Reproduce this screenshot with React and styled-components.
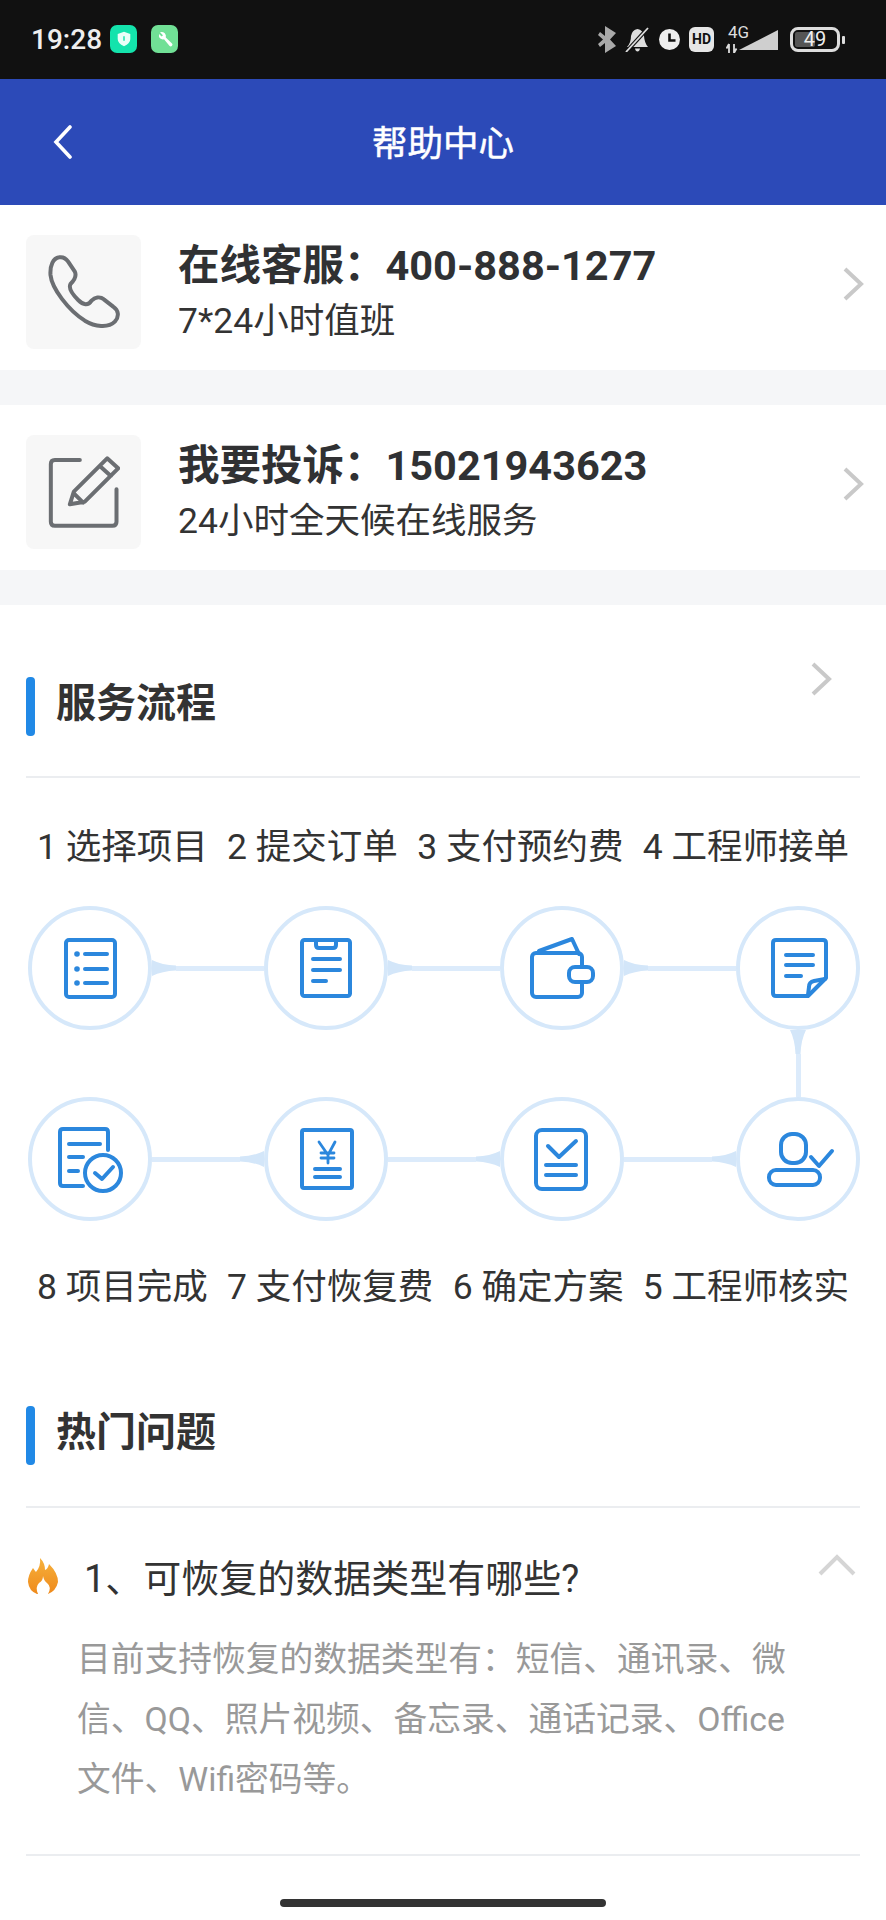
import styled, { createGlobalStyle } from "styled-components";

const GlobalStyle = createGlobalStyle`
  html, body {
    margin: 0;
    padding: 0;
    background: #fff;
  }
  body {
    font-family: Roboto, "Noto Sans CJK SC", sans-serif;
    color: #303133;
  }
`;

const FIRST_STEPS = ["1 选择项目", "2 提交订单", "3 支付预约费", "4 工程师接单"];
const LAST_STEPS = ["8 项目完成", "7 支付恢复费", "6 确定方案", "5 工程师核实"];

const ListIcon = () => (
  <>
    <rect x="-24" y="-28" width="49" height="57" rx="3" />
    <path d="M-5 -14H17M-5 1H17M-5 15H17" />
    <circle className="dot" cx="-13" cy="-14" r="2.8" />
    <circle className="dot" cx="-13" cy="1" r="2.8" />
    <circle className="dot" cx="-13" cy="15" r="2.8" />
  </>
);

const OrderIcon = () => (
  <>
    <rect x="-24" y="-28" width="48" height="56" rx="2.5" />
    <path d="M-10 -27V-23Q-10 -20 -7 -20H7Q10 -20 10 -23V-27" />
    <path d="M-13 -9H14M-13 2H14M-13 13H0" />
  </>
);

const WalletIcon = () => (
  <>
    <path d="M-23 -17L10 -29L17 -14" />
    <rect x="-30" y="-15" width="50" height="44" rx="4" />
    <rect className="solid" x="7" y="-1" width="24" height="15" rx="6" />
  </>
);

const NoteIcon = () => (
  <>
    <path d="M10 28H-22Q-25 28 -25 25V-25Q-25 -28 -22 -28H25Q28 -28 28 -25V10Z" />
    <path d="M27 11L16 13Q11 14 11 19L10 27" />
    <path d="M-12 -13H15M-12 -3H15M-12 8H3" />
  </>
);

const ConfirmIcon = () => (
  <>
    <path d="M-7 27H-27Q-30 27 -30 24V-27Q-30 -30 -27 -30H15Q18 -30 18 -27V-9" />
    <path d="M-21 -15H10M-21 -2H-7M-21 12H-12" />
    <circle cx="13" cy="14" r="18" />
    <path d="M5 14L12 20L23 8" />
  </>
);

const FeeIcon = () => (
  <>
    <rect x="-24" y="-29" width="50" height="58" rx="2" />
    <path strokeWidth="2.8" d="M-7 -17L2 -4L9 -17M2 -4V4M-5 -6H8M-5 -1H8" />
    <path d="M-11 10H14M-11 18H14" />
  </>
);

const PlanIcon = () => (
  <>
    <rect x="-26" y="-29" width="50" height="59" rx="6" />
    <path d="M-14 -13L-3 -2L14 -18" />
    <path d="M-16 6H14M-16 16H14" />
  </>
);

const VerifyIcon = () => (
  <>
    <rect x="-17" y="-25" width="25" height="29" rx="11" />
    <rect x="-29" y="11" width="51" height="15" rx="7" />
    <path d="M13 -2L21 7L34 -8" />
  </>
);

const StepIcon = ({ children }) => <IconSvg viewBox="-40 -40 80 80">{children}</IconSvg>;

const Chevron = ({ className }) => (
  <svg className={className} viewBox="0 0 24 36" width="24" height="36">
    <path d="M4 3L20 18L4 33" fill="none" stroke="#c9c9c9" strokeWidth="4" />
  </svg>
);

export default function App() {
  return (
    <Page>
      <GlobalStyle />
      <StatusBar>
        <StatusLeft>
          <Clock>19:28</Clock>
          <AppBadge $bg="#14e3ac">
            <svg viewBox="0 0 20 20" width="18" height="18">
              <path d="M10 2L17 4.5V10Q17 15 10 18Q3 15 3 10V4.5Z" fill="#eafff8" />
              <path d="M10 7V12" stroke="#14e3ac" strokeWidth="1.6" />
            </svg>
          </AppBadge>
          <AppBadge $bg="#71e096" $gap>
            <svg viewBox="0 0 20 20" width="20" height="20">
              <path
                d="M5 3.2L8 6.2L6.6 7.6L4 5Q3.3 8 5.3 9.6Q6.9 10.8 9 10.2L14.6 17Q15.8 18 17 16.8Q18 15.6 17 14.6L10.8 8.4Q11.4 6 9.8 4.2Q7.8 2.4 5 3.2Z"
                fill="#fff"
              />
            </svg>
          </AppBadge>
        </StatusLeft>
        <StatusRight>
          <svg viewBox="0 0 18 27" width="18" height="27">
            <path d="M7 0L18 7L12 13.5L18 20L7 27V17L2 21L0 18L5 13.5L0 9L2 6L7 10Z" fill="#a9a9a9" />
          </svg>
          <svg viewBox="0 0 25 25" width="25" height="25">
            <path d="M12.5 2Q18 3 19 9Q19.5 16 23 20H2Q6 16 6 9Q7 3 12.5 2Z" fill="#ddd" />
            <path d="M10 21.5H15Q14.5 24.5 12.5 24.5Q10.5 24.5 10 21.5Z" fill="#ddd" />
            <path d="M23 1L2 24" stroke="#111" strokeWidth="4" />
            <path d="M23 1L1 25" stroke="#ddd" strokeWidth="1.8" />
          </svg>
          <svg viewBox="0 0 21 21" width="21" height="21">
            <circle cx="10.5" cy="10.5" r="10.5" fill="#eee" />
            <path d="M10.5 4.5V11.5H16.5" fill="none" stroke="#111" strokeWidth="2.6" />
          </svg>
          <HdBadge>HD</HdBadge>
          <Signal>
            <NetworkLabel>4G</NetworkLabel>
            <svg viewBox="0 0 52 27" width="52" height="27">
              <path d="M13 24L52 4V24Z" fill="#cfcfcf" />
              <path d="M3 18V27M0.5 22.5L3 18M8 18V27M10.5 22.5L8 27" stroke="#ddd" strokeWidth="1.8" fill="none" />
            </svg>
          </Signal>
          <Battery>
            <BatteryLevel />
            <BatteryText>49</BatteryText>
          </Battery>
          <BatteryNub />
        </StatusRight>
      </StatusBar>

      <NavBar>
        <BackButton viewBox="0 0 20 34" width="20" height="34">
          <path d="M17 2L3 17L17 32" fill="none" stroke="#fff" strokeWidth="3.6" strokeLinecap="round" />
        </BackButton>
        <NavTitle>帮助中心</NavTitle>
      </NavBar>

      <ContactRow>
        <IconBox>
          <svg viewBox="145 135 215 225" width="72" height="75">
            <ContactPath d="M178 142C160 145 150 165 152 195C156 235 205 300 255 332C285 350 325 355 345 335C360 318 355 300 340 290L312 268C300 258 285 262 275 272C265 288 250 285 235 270C220 255 205 235 212 222C222 212 232 200 225 185L205 155C198 145 188 140 178 142Z" />
          </svg>
        </IconBox>
        <ContactText>
          <ContactTitle>在线客服：400-888-1277</ContactTitle>
          <ContactSub>7*24小时值班</ContactSub>
        </ContactText>
        <RowChevron />
      </ContactRow>
      <Gap />
      <ContactRow>
        <IconBox>
          <svg viewBox="145 735 215 225" width="72" height="75">
            <ContactPath d="M240 750H165Q153 750 153 762V935Q153 947 165 947H338Q350 947 350 935V838" />
            <ContactPath d="M210 883L222 845L322 745L355 775L255 875ZM300 768L333 798M222 850L250 878" />
          </svg>
        </IconBox>
        <ContactText>
          <ContactTitle>我要投诉：15021943623</ContactTitle>
          <ContactSub>24小时全天候在线服务</ContactSub>
        </ContactText>
        <RowChevron />
      </ContactRow>
      <Gap />

      <Section>
        <Heading>
          <HeadingBar />
          <HeadingTitle>服务流程</HeadingTitle>
          <HeadingChevron />
        </Heading>
        <StepLabels>
          {FIRST_STEPS.map((step) => (
            <span key={step}>{step}</span>
          ))}
        </StepLabels>
      </Section>

      <Flow>
        <FlowRow>
          <Node><StepIcon><ListIcon /></StepIcon></Node>
          <Link><Wedge /><Line /></Link>
          <Node><StepIcon><OrderIcon /></StepIcon></Node>
          <Link><Wedge /><Line /></Link>
          <Node><StepIcon><WalletIcon /></StepIcon></Node>
          <Link><Wedge /><Line /></Link>
          <Node><StepIcon><NoteIcon /></StepIcon></Node>
        </FlowRow>
        <DownLink>
          <DownWedge />
          <DownLine />
        </DownLink>
        <FlowRow>
          <Node><StepIcon><ConfirmIcon /></StepIcon></Node>
          <Link><Line /><Wedge $flip /></Link>
          <Node><StepIcon><FeeIcon /></StepIcon></Node>
          <Link><Line /><Wedge $flip /></Link>
          <Node><StepIcon><PlanIcon /></StepIcon></Node>
          <Link><Line /><Wedge $flip /></Link>
          <Node><StepIcon><VerifyIcon /></StepIcon></Node>
        </FlowRow>
      </Flow>

      <Section>
        <StepLabels $bottom>
          {LAST_STEPS.map((step) => (
            <span key={step}>{step}</span>
          ))}
        </StepLabels>
        <Heading $hot>
          <HeadingBar />
          <HeadingTitle>热门问题</HeadingTitle>
        </Heading>
        <Question>
          <Flame viewBox="0 0 30 36" width="30" height="36">
            <defs>
              <linearGradient id="flame" x1="0" y1="0" x2="0" y2="1">
                <stop offset="0" stopColor="#f6b13c" />
                <stop offset="1" stopColor="#ef8a1c" />
              </linearGradient>
            </defs>
            <path
              d="M12 0Q17 5 17 12Q20 11 21 6Q30 15 30 24Q28 33 20 36H9Q1 33 0 24Q0 17 5 10Q7 13 8 14Q13 8 12 0Z"
              fill="url(#flame)"
            />
            <path d="M15 18Q15 23 11 25Q7 29 10 36H20Q24 29 19 25Q16 23 15 18Z" fill="#fff" />
          </Flame>
          <QuestionText>1、可恢复的数据类型有哪些?</QuestionText>
          <UpChevron viewBox="0 0 38 22" width="38" height="22">
            <path d="M2 20L19 3L36 20" fill="none" stroke="#d5d5d5" strokeWidth="4" />
          </UpChevron>
        </Question>
        <Answer>目前支持恢复的数据类型有：短信、通讯录、微信、QQ、照片视频、备忘录、通话记录、Office文件、Wifi密码等。</Answer>
      </Section>

      <HomeBar />
    </Page>
  );
}

const Page = styled.div`
  width: 886px;
  height: 1920px;
  overflow: hidden;
  background: #fff;
`;

const StatusBar = styled.div`
  height: 79px;
  box-sizing: border-box;
  background: #111;
  display: flex;
  align-items: center;
  justify-content: space-between;
  padding: 0 41px 0 31px;
`;

const StatusLeft = styled.div`
  display: flex;
  align-items: center;
`;

const Clock = styled.span`
  color: #eee;
  font-size: 28px;
  font-weight: 500;
  line-height: 34px;
  margin-right: 8px;
`;

const AppBadge = styled.span`
  width: 27px;
  height: 28px;
  margin-top: -2px;
  border-radius: 7px;
  background: ${({ $bg }) => $bg};
  display: flex;
  align-items: center;
  justify-content: center;
  margin-left: ${({ $gap }) => ($gap ? "14px" : "0")};
`;

const StatusRight = styled.div`
  display: flex;
  align-items: center;
  gap: 9px;
`;

const HdBadge = styled.span`
  width: 25px;
  height: 25px;
  border-radius: 6px;
  background: #e6e6e6;
  color: #111;
  font-size: 14px;
  font-weight: 700;
  line-height: 25px;
  text-align: center;
`;

const Signal = styled.div`
  display: grid;
  width: 52px;
  height: 27px;
  margin: 0 3px;

  & > * {
    grid-area: 1 / 1;
  }
`;

const NetworkLabel = styled.span`
  color: #ddd;
  font-size: 17px;
  line-height: 13px;
  margin-left: 2px;
`;

const Battery = styled.div`
  position: relative;
  box-sizing: border-box;
  width: 50px;
  height: 25px;
  border: 3px solid #ddd;
  border-radius: 8px;
  padding: 2px;
`;

const BatteryLevel = styled.div`
  width: 49%;
  height: 100%;
  border-radius: 2px;
  background: #555;
`;

const BatteryText = styled.span`
  position: absolute;
  inset: 0;
  text-align: center;
  color: #eee;
  font-size: 20px;
  line-height: 19px;
`;

const BatteryNub = styled.div`
  width: 3px;
  height: 8px;
  border-radius: 1px;
  background: #ddd;
  margin-left: -7px;
`;

const NavBar = styled.div`
  height: 126px;
  background: #2c4ab8;
  position: relative;
  display: flex;
  align-items: center;
  justify-content: center;
`;

const BackButton = styled.svg`
  position: absolute;
  left: 53px;
  top: 46px;
`;

const NavTitle = styled.div`
  color: #fff;
  font-size: 35.5px;
  line-height: 50px;
  padding-top: 4px;
  -webkit-text-stroke: 0.5px #fff;
`;

const ContactRow = styled.div`
  height: 165px;
  box-sizing: border-box;
  padding: 30px 21px 0 26px;
  display: flex;
  align-items: flex-start;
`;

const IconBox = styled.div`
  width: 115px;
  height: 114px;
  border-radius: 8px;
  background: #f7f7f7;
  display: flex;
  align-items: center;
  justify-content: center;
  flex-shrink: 0;
`;

const ContactPath = styled.path`
  fill: none;
  stroke: #6b6e72;
  stroke-width: 12;
  stroke-linejoin: round;
  stroke-linecap: round;
`;

const ContactText = styled.div`
  flex: 1;
  margin-left: 37px;
  padding-top: 6px;
`;

const ContactTitle = styled.div`
  font-size: 41.5px;
  line-height: 50px;
  font-weight: 700;
  color: #303133;
`;

const ContactSub = styled.div`
  margin-top: 8px;
  font-size: 35.5px;
  line-height: 44px;
  color: #333;
`;

const RowChevron = styled(Chevron)`
  margin-top: 31px;
`;

const Gap = styled.div`
  height: 35px;
  background: #f5f6f8;
`;

const Section = styled.div`
  padding: 0 26px;
`;

const Heading = styled.div`
  display: flex;
  align-items: flex-start;
  padding: ${({ $hot }) => ($hot ? "83px 0 41px" : "56px 0 40px")};
  border-bottom: 2px solid #ebedf0;
`;

const HeadingBar = styled.div`
  width: 9px;
  height: 59px;
  margin-top: 16px;
  border-radius: 4px;
  background: #2189e6;
`;

const HeadingTitle = styled.div`
  margin: 18px 0 0 21px;
  flex: 1;
  font-size: 40px;
  line-height: 50px;
  font-weight: 700;
  color: #333;
`;

const HeadingChevron = styled(Chevron)`
  margin-right: 27px;
`;

const StepLabels = styled.div`
  display: flex;
  justify-content: space-between;
  padding: 0 11px;
  margin-top: ${({ $bottom }) => ($bottom ? "46px" : "49px")};
  font-size: 35.5px;
  line-height: 40px;
  color: #333;
`;

const Flow = styled.div`
  margin-top: 39px;
  padding: 0 26px 0 28px;
`;

const FlowRow = styled.div`
  display: flex;
  align-items: center;
`;

const Node = styled.div`
  width: 124px;
  height: 124px;
  box-sizing: border-box;
  flex-shrink: 0;
  border: 4.5px solid #d6e8fa;
  border-radius: 50%;
  display: flex;
  align-items: center;
  justify-content: center;
`;

const IconSvg = styled.svg`
  width: 80px;
  height: 80px;
  fill: none;
  stroke: #2b87dd;
  stroke-width: 4;
  stroke-linecap: round;
  stroke-linejoin: round;

  .dot {
    fill: #2b87dd;
    stroke: none;
  }
  .solid {
    fill: #fff;
  }
`;

const Link = styled.div`
  flex: 1;
  display: flex;
  align-items: center;
`;

const Line = styled.div`
  flex: 1;
  height: 5px;
  background: #dcebfb;
`;

const Wedge = styled.div`
  width: 24px;
  height: 16px;
  background: #d3e6f9;
  clip-path: ${({ $flip }) =>
    $flip
      ? 'path("M24 0Q14 5 0 5.5V10.5Q14 11 24 16Z")'
      : 'path("M0 0Q10 5 24 5.5V10.5Q10 11 0 16Z")'};
`;

const DownLink = styled.div`
  width: 124px;
  height: 67px;
  margin-left: auto;
  display: flex;
  flex-direction: column;
  align-items: center;
`;

const DownWedge = styled.div`
  width: 16px;
  height: 24px;
  background: #d3e6f9;
  clip-path: path("M0 0Q5 10 5.5 24H10.5Q11 10 16 0Z");
`;

const DownLine = styled.div`
  flex: 1;
  width: 5px;
  background: #dcebfb;
`;

const Question = styled.div`
  display: flex;
  align-items: flex-start;
  padding: 44px 4px 0 2px;
`;

const Flame = styled.svg`
  margin-top: 6px;
  flex-shrink: 0;
`;

const QuestionText = styled.div`
  flex: 1;
  margin: 2px 0 0 26px;
  font-size: 38px;
  line-height: 50px;
  color: #333;
`;

const UpChevron = styled.svg`
  margin-top: 2px;
`;

const Answer = styled.div`
  margin-top: 26px;
  padding: 0 60px 44px 51px;
  font-size: 33.75px;
  line-height: 60px;
  color: #999;
  border-bottom: 2px solid #ebedf0;
`;

const HomeBar = styled.div`
  width: 326px;
  height: 8px;
  margin: 43px auto 0;
  border-radius: 4px;
  background: #333;
`;
